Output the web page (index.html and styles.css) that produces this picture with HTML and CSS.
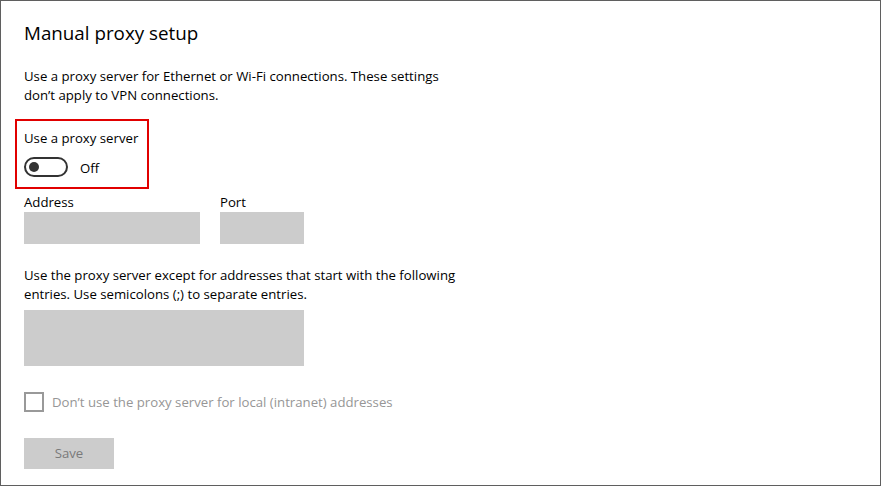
FILE: index.html
```html
<!DOCTYPE html>
<html lang="en">
<head>
<meta charset="utf-8">
<title>Manual proxy setup</title>
<link rel="stylesheet" href="styles.css">
</head>
<body>
<div class="panel">
  <h1 class="title">Manual proxy setup</h1>
  <p class="desc">Use a proxy server for Ethernet or Wi-Fi connections. These settings<br>don’t apply to VPN connections.</p>
  <div class="highlight">
    <div class="label">Use a proxy server</div>
    <div class="toggle-row">
      <span class="toggle"><span class="knob"></span></span>
      <span class="toggle-text">Off</span>
    </div>
  </div>
  <div class="fields">
    <div class="field">
      <div class="label">Address</div>
      <div class="input input-address"></div>
    </div>
    <div class="field">
      <div class="label">Port</div>
      <div class="input input-port"></div>
    </div>
  </div>
  <p class="desc desc-except">Use the proxy server except for addresses that start with the following<br>entries. Use semicolons (;) to separate entries.</p>
  <div class="textarea"></div>
  <div class="check-row">
    <span class="checkbox"></span>
    <span class="check-text">Don’t use the proxy server for local (intranet) addresses</span>
  </div>
  <div class="save">Save</div>
</div>
</body>
</html>
```
FILE: styles.css
```css
html, body {
  margin: 0;
  padding: 0;
  background: #ffffff;
}
body {
  font-family: "Open Sans", "Noto Sans", "Liberation Sans", sans-serif;
  color: #000000;
  font-size: 13.2px;
  line-height: 19px;
}
.panel {
  box-sizing: border-box;
  width: 881px;
  height: 486px;
  border: 1px solid #5f5f5f;
  padding: 0 0 0 23px;
  background: #ffffff;
}
.title {
  margin: 18px 0 0 0;
  font-size: 18.8px;
  line-height: 28px;
  font-weight: 400;
}
.desc {
  margin: 20px 0 0 0;
}
.highlight {
  box-sizing: border-box;
  width: 134px;
  height: 70px;
  margin: 14px 0 0 -9px;
  border: 2px solid #e10000;
  padding: 8px 0 0 7px;
}
.toggle-row {
  display: flex;
  align-items: center;
  margin-top: 9px;
  gap: 12px;
}
.toggle {
  box-sizing: border-box;
  width: 44px;
  height: 20px;
  border: 2px solid #333333;
  border-radius: 10px;
  display: flex;
  align-items: center;
  padding-left: 3px;
}
.toggle-text {
  position: relative;
  top: 1px;
}
.knob {
  width: 10px;
  height: 10px;
  border-radius: 50%;
  background: #333333;
}
.fields {
  display: flex;
  gap: 20px;
  margin-top: 4px;
}
.input {
  height: 32px;
  background: #cccccc;
}
.input-address { width: 176px; }
.input-port { width: 84px; }
.desc-except {
  margin-top: 22px;
}
.textarea {
  width: 280px;
  height: 56px;
  margin-top: 6px;
  background: #cccccc;
}
.check-row {
  display: flex;
  align-items: center;
  gap: 8px;
  margin-top: 26px;
}
.checkbox {
  box-sizing: border-box;
  width: 20px;
  height: 20px;
  border: 2px solid #999999;
}
.check-text {
  color: #969696;
}
.save {
  width: 90px;
  height: 31px;
  margin-top: 26px;
  background: #cccccc;
  color: #7a7a7a;
  display: flex;
  align-items: center;
  justify-content: center;
}
```
